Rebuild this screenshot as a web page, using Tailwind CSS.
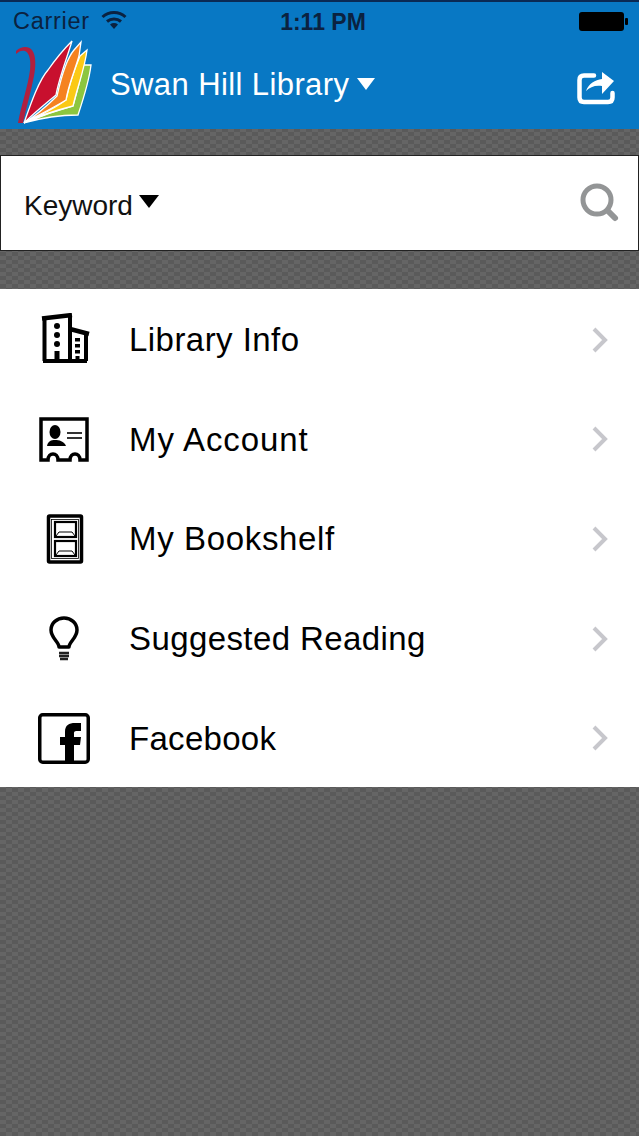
<!DOCTYPE html>
<html lang="en">
<head>
  <meta charset="UTF-8">
  <title>Swan Hill Library</title>
  <script src="https://cdn.jsdelivr.net/npm/@tailwindcss/browser@4"></script>
</head>
<body class="w-[639px] h-[1136px] overflow-hidden font-['Liberation_Sans',Arial,sans-serif] bg-[#5e5e5e] bg-[repeating-conic-gradient(#5a5a5a_0_25%,#656565_0_50%)] bg-[length:12px_8px]">
  <!-- Header -->
  <header class="h-[129px] bg-[#0878c4] border-t-2 border-[#0a2a55] relative">
    <!-- Status bar -->
    <div class="h-[40px] flex items-center justify-between pl-[13px] pr-[11px] text-[#0b2240]">
      <div class="flex items-center gap-[11px] w-[200px]">
        <span class="text-[23.5px] leading-none tracking-[0.7px]">Carrier</span>
        <svg width="26" height="20" viewBox="0 0 26 20" class="-mt-[4px]">
          <path d="M1.5 7 C8 1 18 1 24.5 7" fill="none" stroke="#0b2240" stroke-width="3"/>
          <path d="M6 11.5 C10 8 16 8 20 11.5" fill="none" stroke="#0b2240" stroke-width="3"/>
          <path d="M9 14.5 C11.5 12.6 14.5 12.6 17 14.5 L13 19 Z" fill="#0b2240"/>
        </svg>
      </div>
      <span class="text-[23px] leading-none font-bold text-[#0b2240] ml-[5px]">1:11 PM</span>
      <div class="w-[200px] flex justify-end">
        <svg width="49" height="20" viewBox="0 0 49 20">
          <rect x="0" y="0" width="45" height="19" rx="3" fill="#000"/>
          <rect x="46" y="6" width="3" height="7" rx="1" fill="#000"/>
        </svg>
      </div>
    </div>
    <!-- Nav bar -->
    <div class="h-[87px] flex items-center pl-[110px] pr-[22px] relative">
      <svg width="80" height="90" viewBox="0 0 80 90" class="absolute left-[15px] top-[-4px]">
        <path d="M1 13 C6 8 14 8 17 12 C21 17 21 28 19 38 C16 54 11 70 8 85 L3 85 C6 68 13 48 15 32 C16 24 15 15 10 13 C7 12 4 13 1 16 Z" fill="#b0203f"/>
        <path d="M9 85 C26 78 44 72 58 68 C62 54 66 40 68 27 L76 27 C74 44 68 62 63 77 C44 77 26 80 9 85 Z" fill="#8cc63f" stroke="#fff" stroke-width="1.3"/>
        <path d="M9 85 C24 78 40 70 51 62 C54 48 60 30 65 18 L72 12 C70 30 62 50 58 68 C42 72 24 78 9 85 Z" fill="#fbc915" stroke="#fff" stroke-width="1.3"/>
        <path d="M9 85 C20 78 34 66 42 58 C46 40 52 20 59 12 L66 4 L64 18 C60 32 53 48 51 62 C38 70 22 78 9 85 Z" fill="#f58220" stroke="#fff" stroke-width="1.3"/>
        <path d="M9 85 C16 65 24 42 33 32 C40 22 49 11 57 3 C52 20 44 40 41 57 C30 66 18 76 9 85 Z" fill="#c8102e" stroke="#fff" stroke-width="1.3"/>
      </svg>
      <span class="text-white text-[31px] leading-none tracking-[0.4px] -mt-[2px]">Swan Hill Library</span>
      <span class="ml-[8px] mt-[-3px] w-0 h-0 border-l-[9px] border-r-[9px] border-t-[12px] border-l-transparent border-r-transparent border-t-white"></span>
      <svg width="40" height="34" viewBox="0 0 40 34" class="ml-auto mt-[5px]">
        <path d="M17 4.5 H7 Q2.5 4.5 2.5 9 V26.5 Q2.5 31 7 31 H31 Q35.5 31 35.5 26.5 V22" fill="none" stroke="#fff" stroke-width="4.5" stroke-linecap="round"/>
        <path d="M9 20 C12 12 18 9 25 8 V1 L37 10 L25 23 V15 C18 14 13 16 9 20 Z" fill="#fff"/>
      </svg>
    </div>
  </header>

  <!-- Search -->
  <div class="mt-[26px] h-[96px] bg-white border border-[#222] flex items-center pl-[23px] pr-[18px]">
    <span class="text-[28px] leading-none text-[#111] mt-[5px]">Keyword</span>
    <span class="ml-[6px] mt-[-3px] w-0 h-0 border-l-[10px] border-r-[10px] border-t-[13px] border-l-transparent border-r-transparent border-t-black"></span>
    <svg width="40" height="40" viewBox="0 0 40 40" class="ml-auto">
      <circle cx="17" cy="17" r="14" fill="none" stroke="#939596" stroke-width="5"/>
      <path d="M28 28 L35 35" stroke="#939596" stroke-width="6" stroke-linecap="round"/>
    </svg>
  </div>

  <!-- Menu -->
  <ul class="mt-[38px] bg-white h-[498px] flex flex-col">
    <li class="flex-1 flex items-center relative pl-[129px] pr-[30px]">
      <svg width="52" height="52" viewBox="0 0 52 52" class="absolute left-[39px] top-[24px]">
        <path d="M5.5 5 V48 M31 3 V48 M47 20 V48 M4 48 H48" fill="none" stroke="#000" stroke-width="4"/>
        <path d="M3 5.5 L33 2 M31 16 L50 21" stroke="#000" stroke-width="4.5"/>
        <circle cx="18" cy="13" r="3" fill="#000"/><circle cx="18" cy="22" r="3" fill="#000"/><circle cx="18" cy="31" r="3" fill="#000"/>
        <rect x="15.5" y="38" width="5" height="10" fill="#000"/>
        <rect x="36" y="25" width="5" height="3.5" fill="#000"/><rect x="36" y="31" width="5" height="3.5" fill="#000"/><rect x="36" y="37" width="5" height="3.5" fill="#000"/><rect x="36.5" y="43" width="4" height="5" fill="#000"/>
      </svg>
      <span class="text-[33px] leading-none text-black tracking-[0.45px] mt-[2px]">Library Info</span>
      <svg width="18" height="28" viewBox="0 0 18 28" class="ml-auto mt-[2px]"><path d="M3 3 L14 14 L3 25" fill="none" stroke="#c7c7cc" stroke-width="4"/></svg>
    </li>
    <li class="flex-1 flex items-center relative pl-[129px] pr-[30px]">
      <svg width="52" height="46" viewBox="0 0 52 46" class="absolute left-[39px] top-[28px]">
        <path d="M2 43 V2 H48 V43 H41 C41 35 31 35 31 43 H19 C19 35 9 35 9 43 Z" fill="none" stroke="#000" stroke-width="3.5"/>
        <ellipse cx="16" cy="15" rx="5.5" ry="7" fill="#000"/>
        <path d="M8 29 C9 24 12 23 16 23 C20 23 25 24 27 29 Z" fill="#000"/>
        <path d="M28 16 H43 M28 21 H43" stroke="#333" stroke-width="2"/>
      </svg>
      <span class="text-[33px] leading-none text-black tracking-[0.9px] mt-[2px]">My Account</span>
      <svg width="18" height="28" viewBox="0 0 18 28" class="ml-auto mt-[2px]"><path d="M3 3 L14 14 L3 25" fill="none" stroke="#c7c7cc" stroke-width="4"/></svg>
    </li>
    <li class="flex-1 flex items-center relative pl-[129px] pr-[30px]">
      <svg width="38" height="50" viewBox="0 0 38 50" class="absolute left-[46px] top-[26px]">
        <rect x="2.5" y="2" width="33" height="46" rx="1" fill="none" stroke="#000" stroke-width="3.5"/>
        <rect x="5.5" y="5.5" width="27" height="39" fill="none" stroke="#000" stroke-width="0.8"/>
        <rect x="9" y="8" width="21" height="15" fill="none" stroke="#000" stroke-width="2.2"/>
        <rect x="9" y="27" width="21" height="15" fill="none" stroke="#000" stroke-width="2.2"/>
        <path d="M10 22 L13 18 H26 L29 22 M10 41 L13 37 H26 L29 41" fill="none" stroke="#000" stroke-width="1"/>
      </svg>
      <span class="text-[33px] leading-none text-black tracking-[0.65px] mt-[2px]">My Bookshelf</span>
      <svg width="18" height="28" viewBox="0 0 18 28" class="ml-auto mt-[2px]"><path d="M3 3 L14 14 L3 25" fill="none" stroke="#c7c7cc" stroke-width="4"/></svg>
    </li>
    <li class="flex-1 flex items-center relative pl-[129px] pr-[30px]">
      <svg width="32" height="48" viewBox="0 0 32 48" class="absolute left-[48px] top-[28px]">
        <path d="M11 31 C11 26 3 22 3 14 C3 7 9 2 16 2 C23 2 29 7 29 14 C29 22 21 26 21 31 Z" fill="none" stroke="#000" stroke-width="3.5" stroke-linejoin="round"/>
        <path d="M11 37 H21 M11 40 H21 M12 43 H20" stroke="#222" stroke-width="2.5"/>
      </svg>
      <span class="text-[33px] leading-none text-black tracking-[0.4px] mt-[2px]">Suggested Reading</span>
      <svg width="18" height="28" viewBox="0 0 18 28" class="ml-auto mt-[2px]"><path d="M3 3 L14 14 L3 25" fill="none" stroke="#c7c7cc" stroke-width="4"/></svg>
    </li>
    <li class="flex-1 flex items-center relative pl-[129px] pr-[30px]">
      <svg width="54" height="54" viewBox="0 0 54 54" class="absolute left-[37px] top-[25px]">
        <rect x="2.75" y="2.75" width="48.5" height="47.5" rx="3" fill="none" stroke="#000" stroke-width="3.5"/>
        <path d="M28 51 V33 H23 V25 H28 V20 C28 13 32 11 38 11 H44 V19 H40 C37 19 37 20 37 22 V25 H44 L43 33 H37 V51 Z" fill="#000"/>
      </svg>
      <span class="text-[33px] leading-none text-black tracking-[0.3px] mt-[2px]">Facebook</span>
      <svg width="18" height="28" viewBox="0 0 18 28" class="ml-auto mt-[2px]"><path d="M3 3 L14 14 L3 25" fill="none" stroke="#c7c7cc" stroke-width="4"/></svg>
    </li>
  </ul>
</body>
</html>
